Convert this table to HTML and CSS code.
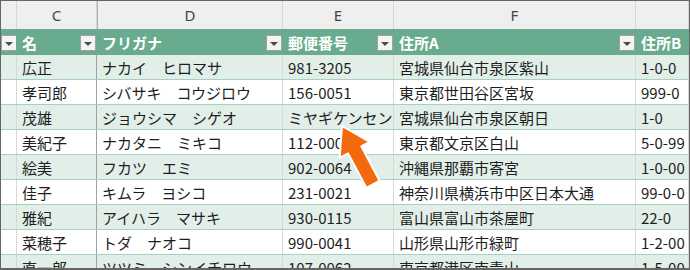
FILE: index.html
```html
<!DOCTYPE html>
<html lang="ja">
<head>
<meta charset="utf-8">
<title>Sheet</title>
<link rel="stylesheet" href="styles.css">
</head>
<body>
<div class="sheet">
  <div class="row colheads">
    <div class="ch"></div>
    <div class="ch">C</div>
    <div class="ch freeze">D</div>
    <div class="ch">E</div>
    <div class="ch">F</div>
    <div class="ch"></div>
  </div>
  <div class="row thead">
    <div class="th"><span class="filter"></span></div>
    <div class="th"><span>名</span><span class="filter"></span></div>
    <div class="th"><span>フリガナ</span><span class="filter"></span></div>
    <div class="th"><span>郵便番号</span><span class="filter"></span></div>
    <div class="th"><span>住所A</span><span class="filter"></span></div>
    <div class="th"><span>住所B</span></div>
  </div>
  <div class="row band"><div class="td"></div><div class="td freeze">広正</div><div class="td">ナカイ　ヒロマサ</div><div class="td">981-3205</div><div class="td">宮城県仙台市泉区紫山</div><div class="td">1-0-0</div></div>
  <div class="row"><div class="td"></div><div class="td freeze">孝司郎</div><div class="td">シバサキ　コウジロウ</div><div class="td">156-0051</div><div class="td">東京都世田谷区宮坂</div><div class="td">999-0</div></div>
  <div class="row band"><div class="td"></div><div class="td freeze">茂雄</div><div class="td">ジョウシマ　シゲオ</div><div class="td">ミヤギケンセンダイシ</div><div class="td">宮城県仙台市泉区朝日</div><div class="td">1-0</div></div>
  <div class="row"><div class="td"></div><div class="td freeze">美紀子</div><div class="td">ナカタニ　ミキコ</div><div class="td">112-0001</div><div class="td">東京都文京区白山</div><div class="td">5-0-99</div></div>
  <div class="row band"><div class="td"></div><div class="td freeze">絵美</div><div class="td">フカツ　エミ</div><div class="td">902-0064</div><div class="td">沖縄県那覇市寄宮</div><div class="td">1-0-00</div></div>
  <div class="row"><div class="td"></div><div class="td freeze">佳子</div><div class="td">キムラ　ヨシコ</div><div class="td">231-0021</div><div class="td">神奈川県横浜市中区日本大通</div><div class="td">99-0-0</div></div>
  <div class="row band"><div class="td"></div><div class="td freeze">雅紀</div><div class="td">アイハラ　マサキ</div><div class="td">930-0115</div><div class="td">富山県富山市茶屋町</div><div class="td">22-0</div></div>
  <div class="row"><div class="td"></div><div class="td freeze">菜穂子</div><div class="td">トダ　ナオコ</div><div class="td">990-0041</div><div class="td">山形県山形市緑町</div><div class="td">1-2-00</div></div>
  <div class="row band"><div class="td"></div><div class="td freeze">直一郎</div><div class="td">ツツミ　シンイチロウ</div><div class="td">107-0062</div><div class="td">東京都港区南青山</div><div class="td">1-5-00</div></div>
  <svg class="arrow" width="690" height="270" viewBox="0 0 690 270">
    <polygon transform="translate(342 126) rotate(-28)" points="0,0 17,27 7.5,27 7.5,66 -7.5,66 -7.5,27 -17,27" fill="#f36a0e" stroke="#ffffff" stroke-width="2" stroke-linejoin="round"/>
  </svg>
</div>
</body>
</html>
```
FILE: styles.css
```css
html, body {
  margin: 0;
  padding: 0;
  background: #ffffff;
}

.sheet {
  position: relative;
  width: 690px;
  height: 270px;
  box-sizing: border-box;
  border: 1px solid #666666;
  border-bottom-width: 2px;
  overflow: hidden;
  font-family: "Noto Sans CJK JP", "Noto Sans", sans-serif;
  font-size: 15px;
  color: #1e1e1e;
}

.row {
  display: grid;
  grid-template-columns: 16px 80px 186px 111px 242px 1fr;
  height: 25px;
  box-sizing: border-box;
  border-bottom: 1px solid #a8d0c1;
  background: #ffffff;
}

.row.band {
  background: #e2efe9;
}

.colheads {
  height: 28px;
  background: #efefef;
  border-bottom: none;
}

.ch {
  display: flex;
  align-items: center;
  justify-content: center;
  border-right: 1px solid #d6d6d6;
  font-family: "Noto Sans", "Liberation Sans", sans-serif;
  font-size: 15px;
  color: #444444;
}

.thead {
  height: 26px;
  background: #68ab8e;
  border-bottom: none;
}

.th {
  display: flex;
  align-items: center;
  justify-content: space-between;
  padding-left: 5px;
  border-right: 1px solid transparent;
  color: #ffffff;
  font-weight: bold;
  white-space: nowrap;
  overflow: hidden;
}

.th:first-child {
  padding-left: 0;
}

.filter {
  position: relative;
  flex: none;
  width: 16px;
  height: 16px;
  box-sizing: border-box;
  background: #f4f4f4;
  border: 1px solid #a2a2a2;
  margin-top: 1px;
}

.filter::after {
  content: "";
  position: absolute;
  left: 3px;
  top: 6px;
  border-left: 4px solid transparent;
  border-right: 4px solid transparent;
  border-top: 4px solid #4a4a4a;
}

.td {
  display: flex;
  align-items: center;
  padding-left: 5px;
  border-right: 1px solid #d8d8d8;
  white-space: nowrap;
  overflow: hidden;
}

.td:first-child {
  padding-left: 0;
}

.td.freeze {
  border-right-color: #a0a0a0;
}

.ch.freeze {
  border-left: 1px solid #b0b0b0;
}

.arrow {
  position: absolute;
  left: -1px;
  top: -1px;
  pointer-events: none;
}
```
